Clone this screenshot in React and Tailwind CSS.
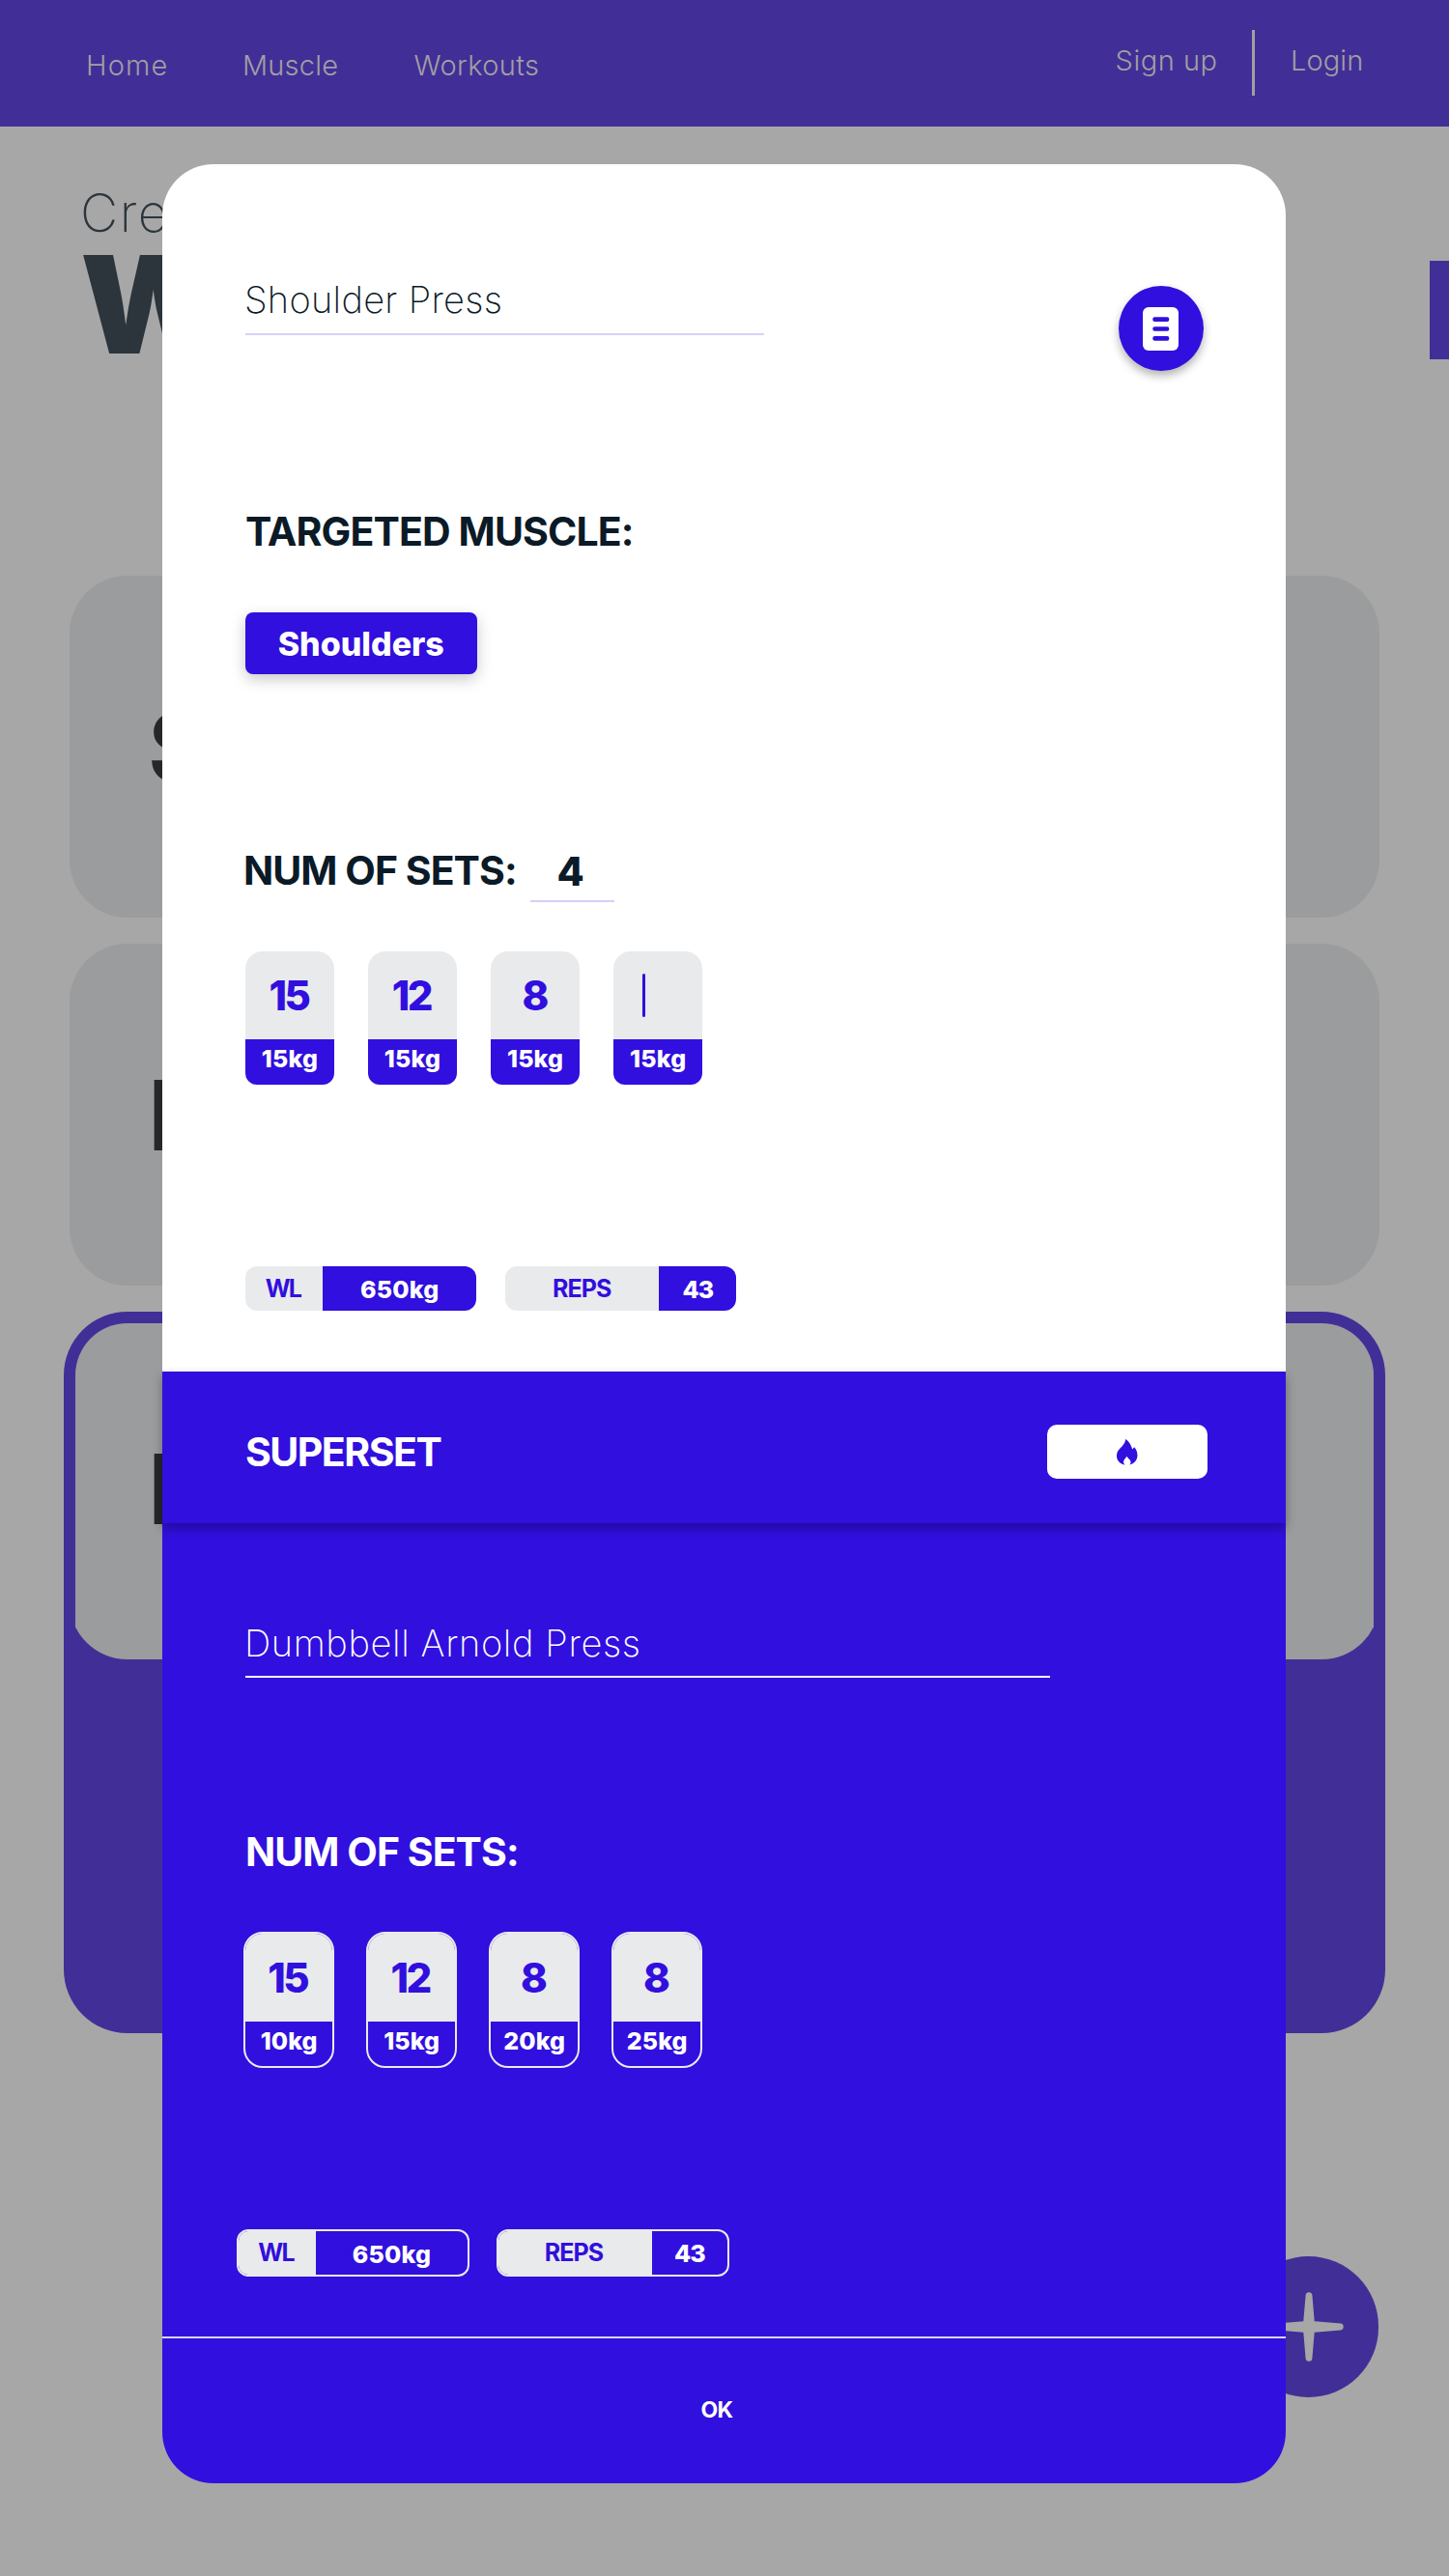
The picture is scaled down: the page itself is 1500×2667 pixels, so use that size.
function NavLink({ className, children }) {
  return (
    <a href="#" className={`block whitespace-nowrap text-[29px] font-light leading-[28px] text-[#a19fa3] ${className}`}>
      {children}
    </a>
  );
}

function Header() {
  return (
    <header className="flex h-[130.5px] items-start bg-[#412f97] pl-[89px]">
      <nav className="flex pt-[54px]">
        <NavLink className="w-[162px] tracking-[1.2px]">Home</NavLink>
        <NavLink className="w-[177.5px] tracking-[0.2px]">Muscle</NavLink>
        <NavLink className="tracking-[0.4px]">Workouts</NavLink>
      </nav>
      <div className="ml-auto flex w-[345.4px] items-start pt-[31px]">
        <NavLink className="mt-[18px] w-[141.4px] tracking-[0.5px]">Sign up</NavLink>
        <div className="h-[68px] w-[2.5px] bg-[#a19fa3]" />
        <NavLink className="ml-[37.5px] mt-[18px] tracking-[0.1px]">Login</NavLink>
      </div>
    </header>
  );
}

function ExerciseCard({ letter }) {
  return (
    <div className="flex h-[354px] items-center rounded-[60px] bg-[#9b9c9d] pl-[81.3px]">
      <span className="text-[101px] font-bold leading-[101px] text-[#272727]">{letter}</span>
    </div>
  );
}

function WorkoutPage() {
  return (
    <div className="h-[2667px] w-[1500px] bg-[#a7a7a7]">
      <Header />
      <main className="pt-[62.5px]">
        <div className="flex h-[192px] items-start justify-between pl-[83px]">
          <h1 className="text-[#2c353c]">
            <span className="block text-[54px] font-extralight leading-[56px] tracking-[1.5px]">Create</span>
            <span className="block w-[200px] text-[140px] font-black leading-[132px]">W</span>
          </h1>
          <div className="mt-[77px] h-[102px] w-5 bg-[#412f97]" />
        </div>

        <section className="mt-[211px] flex flex-col gap-[27px] px-[71.8px]">
          <ExerciseCard letter="S" />
          <ExerciseCard letter="D" />
          <div className="-mx-[6.2px] h-[747px] rounded-[66px] bg-[#412f97] p-[12.4px]">
            <div className="overflow-hidden rounded-t-[54px]">
              <div className="-mx-[6.2px] -mt-[6.2px]">
                <ExerciseCard letter="D" />
              </div>
            </div>
          </div>
        </section>

        <button className="ml-auto mr-[72.6px] mt-[231px] flex size-[145.6px] items-center justify-center rounded-full bg-[#412f97]">
          <svg viewBox="0 0 72 72" className="size-[72px] fill-[#a7a7a7]">
            <path d="M30.3 30.3 32.6 3.2Q32.9 0.3 36 0.3T39.4 3.2L41.7 30.3 68.8 32.6Q71.7 32.9 71.7 36T68.8 39.4L41.7 41.7 39.4 68.8Q39.1 71.7 36 71.7T32.6 68.8L30.3 41.7 3.2 39.4Q0.3 39.1 0.3 36T3.2 32.6Z" />
          </svg>
        </button>
      </main>
    </div>
  );
}

function SetTile({ reps, weight, active }) {
  return (
    <div className="flex h-[137.7px] w-[92px] flex-col overflow-hidden rounded-b-[12px] rounded-t-[18px] font-extrabold">
      <div className="flex h-[91.5px] items-center justify-center bg-[#e9eaec] pr-[2px] text-[42px] tracking-[-2.5px] text-[#310fde]">
        {active ? <span className="mr-[27px] h-[45px] w-[3px] rounded-full bg-[#310fde]" /> : reps}
      </div>
      <div className="flex flex-1 items-center justify-center bg-[#310fde] pb-[5px] text-[25px] tracking-[0.2px] text-white">
        {weight}
      </div>
    </div>
  );
}

function OutlinedSetTile({ reps, weight }) {
  return (
    <div className="flex h-[141.5px] w-[94px] flex-col overflow-hidden rounded-[20px] border-2 border-[#e9eaec] font-extrabold">
      <div className="flex h-[91.5px] items-center justify-center bg-[#e9eaec] pr-[3px] text-[42px] tracking-[-2.5px] text-[#310fde]">
        {reps}
      </div>
      <div className="flex flex-1 items-center justify-center pb-[5px] text-[25px] tracking-[0.1px] text-white">
        {weight}
      </div>
    </div>
  );
}

function DocumentIcon() {
  return (
    <svg viewBox="0 0 37 45" className="h-[45px] w-[37px]">
      <rect width="37" height="45" rx="6" className="fill-white" />
      <g className="fill-[#310fde]">
        <rect x="10.3" y="10.3" width="17" height="4.6" rx="2" />
        <rect x="10.3" y="20.2" width="17" height="4.6" rx="2" />
        <rect x="10.3" y="30.1" width="17" height="4.6" rx="2" />
      </g>
    </svg>
  );
}

function FlameIcon() {
  return (
    <svg viewBox="0 0 64 80" className="h-[27px] w-[21.5px] fill-[#310fde]">
      <path d="M27 0C37 5 45 18 48 31 50 29 52 27 54 24 60 30 64 40 64 50 64 64 54 76 39 79 42 76 44 72 43 68 41 62 35 60 31 53 28 60 21 63 21 70 21 74 23 77 26 79 11 77 0 66 0 51 0 36 10 30 18 20 24 13 27 8 27 0Z" />
    </svg>
  );
}

const firstSets = [
  { reps: "15", weight: "15kg" },
  { reps: "12", weight: "15kg" },
  { reps: "8", weight: "15kg" },
  { reps: "", weight: "15kg", active: true },
];

const supersetSets = [
  { reps: "15", weight: "10kg" },
  { reps: "12", weight: "15kg" },
  { reps: "8", weight: "20kg" },
  { reps: "8", weight: "25kg" },
];

function ExerciseModal() {
  return (
    <div className="absolute left-[168.4px] top-[170px] flex h-[2400.5px] w-[1163px] flex-col">
      <section className="h-[1250px] rounded-t-[53px] bg-white px-[85.5px] pt-[106px] text-[#0b1a27]">
        <div className="flex h-[108px] items-start justify-between">
          <div className="h-[71px] w-[537px] border-b-2 border-[#d8d1fa] text-[38px] font-extralight leading-[69px] tracking-[0.3px]">
            <span className="-ml-px">Shoulder Press</span>
          </div>
          <button className="mt-5 flex size-[88px] items-center justify-center rounded-full bg-[#310fde] shadow-[0_5px_10px_rgba(0,0,0,0.3)]">
            <DocumentIcon />
          </button>
        </div>

        <h2 className="mt-[145px] whitespace-nowrap text-[41px] font-bold leading-[42px] tracking-[-0.87px]">TARGETED MUSCLE:</h2>
        <div className="mt-[63px] flex h-[64px] w-[239.7px] items-center justify-center rounded-[8px] bg-[#310fde] pt-px text-[34px] font-extrabold tracking-[0px] text-white shadow-[0_5px_15px_rgba(0,0,0,0.22)]">
          Shoulders
        </div>

        <div className="mt-[172px] flex h-[63.7px] text-[41px] font-bold leading-[63px]">
          <h2 className="-ml-[2px] w-[296.8px] whitespace-nowrap tracking-[-0.95px]">NUM OF SETS:</h2>
          <div className="w-[87px] border-b-2 border-[#d6cffa] pr-[3px] text-center font-extrabold leading-[64px]">4</div>
        </div>

        <div className="mt-[51.3px] flex gap-[35.1px]">
          {firstSets.map((set, i) => (
            <SetTile key={i} {...set} />
          ))}
        </div>

        <div className="mt-[188.3px] flex h-[46.3px] gap-[29.4px] text-[25px] font-bold leading-[47px]">
          <div className="flex w-[239.6px] overflow-hidden rounded-[12px] text-center">
            <span className="w-20 bg-[#e9eaec] pr-[2px] tracking-[-1.8px] text-[#310fde]">WL</span>
            <span className="flex-1 bg-[#310fde] pt-px font-extrabold tracking-[0.2px] text-white">650kg</span>
          </div>
          <div className="flex w-[239.6px] overflow-hidden rounded-[12px] text-center">
            <span className="flex-1 bg-[#e9eaec] pr-px tracking-[-0.9px] text-[#310fde]">REPS</span>
            <span className="w-20 bg-[#310fde] pt-px font-extrabold tracking-[-0.8px] text-white">43</span>
          </div>
        </div>
      </section>

      <section className="z-10 flex h-[156.7px] items-center justify-between bg-[#310fde] pl-[85.5px] pr-[81.7px] pt-[9.5px] shadow-[0_5px_10px_rgba(0,0,0,0.32)]">
        <h2 className="text-[41px] font-bold leading-[42px] tracking-[-1.5px] text-white">SUPERSET</h2>
        <button className="flex h-14 w-[165.7px] items-center justify-center rounded-[10px] bg-white">
          <FlameIcon />
        </button>
      </section>

      <section className="h-[842.8px] bg-[#310fde] pl-[85.5px] pt-[91.3px] text-white">
        <div className="h-[69.5px] w-[833.5px] border-b-[2.5px] border-white text-[38px] font-extralight leading-[67px] tracking-[0.62px]">
          <span className="-ml-px">Dumbbell Arnold Press</span>
        </div>

        <h2 className="mt-[158.7px] text-[41px] font-bold leading-[42px] tracking-[-0.95px]">NUM OF SETS:</h2>

        <div className="-ml-[1.7px] mt-[61.8px] flex gap-[33px]">
          {supersetSets.map((set, i) => (
            <OutlinedSetTile key={i} {...set} />
          ))}
        </div>

        <div className="-ml-[8.8px] mt-[166.5px] flex h-[48.7px] gap-[28px] text-[25px] font-bold leading-[45px]">
          <div className="flex w-[240.8px] overflow-hidden rounded-[12px] border-2 border-[#e9eaec] text-center">
            <span className="w-20 bg-[#e9eaec] pr-[3px] tracking-[-1.8px] text-[#310fde]">WL</span>
            <span className="flex-1 pt-[2px] font-extrabold tracking-[0.2px]">650kg</span>
          </div>
          <div className="flex w-[240.8px] overflow-hidden rounded-[12px] border-2 border-[#e9eaec] text-center">
            <span className="flex-1 bg-[#e9eaec] pr-[3px] tracking-[-0.9px] text-[#310fde]">REPS</span>
            <span className="w-[77.5px] pt-px font-extrabold tracking-[-0.8px]">43</span>
          </div>
        </div>
      </section>

      <footer className="flex flex-1 items-center justify-center rounded-b-[53px] border-t-[2.5px] border-[#d9d4fa] bg-[#310fde] pb-[2px] pr-[16px]">
        <button className="text-[23px] font-bold leading-[24px] tracking-[-0.7px] text-white">OK</button>
      </footer>
    </div>
  );
}

export default function App() {
  return (
    <div className="relative h-[2667px] w-[1500px] overflow-hidden font-['Inter',sans-serif]">
      <WorkoutPage />
      <ExerciseModal />
    </div>
  );
}
